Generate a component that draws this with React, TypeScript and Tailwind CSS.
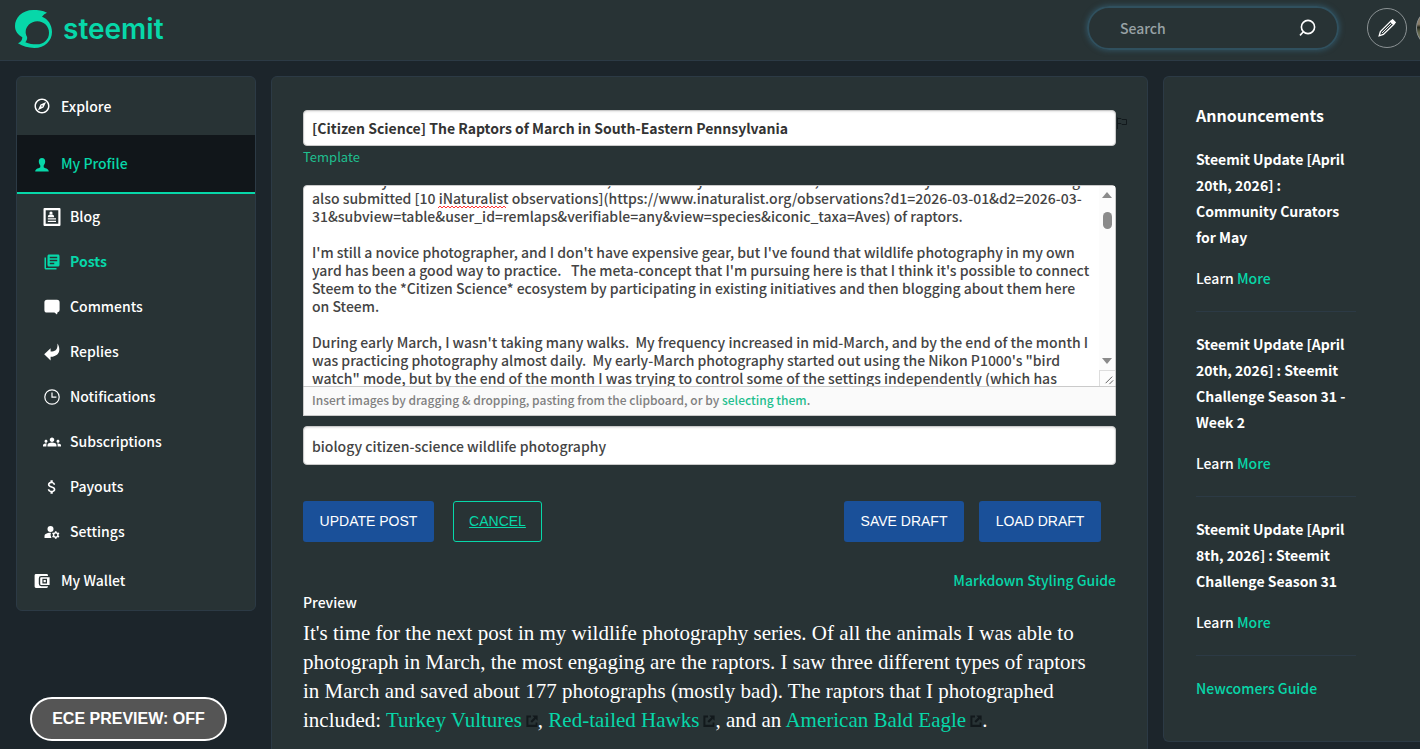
import React, { useEffect, useRef, useState } from 'react';
import { MdAttachMoney, MdGroups, MdLibraryBooks, MdManageAccounts, MdOutlineExplore } from 'react-icons/md';

const initialBody = `Those early hours were the best times to see, and most days I sat at the lake, and in those days I saw them returning. I
also submitted [10 iNaturalist observations](https://www.inaturalist.org/observations?d1=2026-03-01&d2=2026-03-
31&subview=table&user_id=remlaps&verifiable=any&view=species&iconic_taxa=Aves) of raptors.

I'm still a novice photographer, and I don't have expensive gear, but I've found that wildlife photography in my own
yard has been a good way to practice.   The meta-concept that I'm pursuing here is that I think it's possible to connect
Steem to the *Citizen Science* ecosystem by participating in existing initiatives and then blogging about them here
on Steem.

During early March, I wasn't taking many walks.  My frequency increased in mid-March, and by the end of the month I
was practicing photography almost daily.  My early-March photography started out using the Nikon P1000's "bird
watch" mode, but by the end of the month I was trying to control some of the settings independently (which has
been a learning experience).

`;

const announcements = [
  { id: 1, title: 'Steemit Update [April 20th, 2026] : Community Curators for May' },
  { id: 2, title: 'Steemit Update [April 20th, 2026] : Steemit Challenge Season 31 - Week 2' },
  { id: 3, title: 'Steemit Update [April 8th, 2026] : Steemit Challenge Season 31' },
];

const Logo: React.FC = () => (
  <svg viewBox="45 30 111 114" className="h-[38px] w-[37px]" fill="#07d7a9" aria-hidden="true">
    <path
      fillRule="evenodd"
      d="M141 38C128 31 113 30 100 30C65 30 45 54 45 78C45 94 54 104 67 112C67 120 62 127 54 130C68 139 85 144 103 144C135 144 156 122 156 96C156 74 144 57 126 50C130 44 136 40 141 38ZM112 64C132 64 147 79 147 98C147 118 132 133 110 133C98 133 88 132 76 127C80 121 83 115 81 110C78 105 77 101 77 97C77 79 92 64 112 64Z"
    />
  </svg>
);

const SearchIcon: React.FC = () => (
  <svg viewBox="0 0 18 18" className="size-[18px]" fill="none" stroke="#fff" strokeWidth="1.6" aria-hidden="true">
    <circle cx="10" cy="8" r="6.6" />
    <path d="M5.4 12.8L2 16.4" />
  </svg>
);

const PencilIcon: React.FC = () => (
  <svg viewBox="0 0 18 18" className="size-[18px]" fill="none" stroke="#fff" strokeWidth="1.3" aria-hidden="true">
    <path d="M1.2 16.8L2.4 12.6L12.6 2.4L15.6 5.4L5.4 15.4Z" />
    <path d="M4 14L13.6 4.4" strokeWidth="0.9" />
    <path d="M13 2.2L14.6 .8L17.2 3.4L15.8 5Z" fill="#fff" />
  </svg>
);

const PersonIcon: React.FC = () => (
  <svg viewBox="0 0 14 14" className="mt-0.5 size-3.5" fill="currentColor" aria-hidden="true">
    <path d="M7 0C4.8 0 3.7 1.5 3.8 3.6C3.9 5.2 4.4 6.6 5.3 7.4V9.2C4.6 10.2 .2 10.3 .2 13.6H13.8C13.8 10.3 9.4 10.2 8.7 9.2V7.4C9.6 6.6 10.1 5.2 10.2 3.6C10.3 1.5 9.2 0 7 0Z" />
  </svg>
);

const BlogIcon: React.FC = () => (
  <svg viewBox="0 0 18 18" className="size-[18px]" fill="#fff" aria-hidden="true">
    <path fillRule="evenodd" d="M1.5 0H16.5Q17.5 0 17.5 1V17Q17.5 18 16.5 18H1.5Q.5 18 .5 17V1Q.5 0 1.5 0ZM2.7 2.2V15.8H15.3V2.2Z" />
    <circle cx="8" cy="5" r="1.6" />
    <path d="M4.8 9.2C4.8 7 6.2 6.6 8 6.6S11.2 7 11.2 9.2ZM4.8 10.2H13V11.4H4.8ZM4.8 12.8H13V14H4.8Z" />
  </svg>
);

const CommentIcon: React.FC = () => (
  <svg viewBox="0 0 16 16" className="size-4" fill="#fff" aria-hidden="true">
    <path d="M3 .8H13Q15.6 .8 15.6 3.4V11Q15.6 13 13.6 13.2L13 15.4L10.4 13.6H3Q.4 13.6 .4 11V3.4Q.4 .8 3 .8Z" />
  </svg>
);

const ReplyIcon: React.FC = () => (
  <svg viewBox="0 0 16 18" className="h-[18px] w-4" fill="#fff" aria-hidden="true">
    <path d="M.2 11.2L6.6 5.2V8.6C11.4 8.4 14 6.6 13.4 .6C16.8 5.4 16.4 13.2 6.6 13.8V17.4Z" />
  </svg>
);

const ClockIcon: React.FC = () => (
  <svg viewBox="0 0 16 16" className="size-4" fill="none" stroke="#fff" strokeWidth="1.2" aria-hidden="true">
    <circle cx="8" cy="8" r="7.2" />
    <path d="M8 3.6V8.2H12.4" />
  </svg>
);

const WalletIcon: React.FC = () => (
  <svg viewBox="0 0 16 14" className="mt-0.5 h-3.5 w-4" fill="#fff" aria-hidden="true">
    <path d="M2 0H12.6Q14 0 14 1.4V2H7.2Q4.8 2 4.8 4.4V9.8Q4.8 12.2 7.2 12.2H14V12.6Q14 14 12.6 14H2Q.6 14 .6 12.6V1.4Q.6 0 2 0Z" />
    <path fillRule="evenodd" d="M7.2 3.2H15.6V11H7.2Q6.2 11 6.2 10V4.2Q6.2 3.2 7.2 3.2ZM8.4 4.8V9.4H13V4.8Z" />
    <rect x="9.6" y="6" width="2.2" height="2.2" />
  </svg>
);

const FlagIcon: React.FC = () => (
  <svg viewBox="0 0 12 12" className="size-3" fill="none" stroke="#12191c" strokeWidth="1" aria-hidden="true">
    <path d="M1.5 .5V12M1.5 1.5H5L6 2.5H10.5V7.5H6L5 6.5H1.5" />
  </svg>
);

const ExternalIcon: React.FC = () => (
  <svg viewBox="0 0 12 12" className="ml-1 inline size-3 align-baseline" fill="#12191c" aria-hidden="true">
    <path d="M.4 .6H5V2.6H2.4V9.8H9.6V7.4H11.4V12H.4Z" />
    <path d="M6.4 .6H11.6V5.8L9.8 4L6 7.8L4.4 6.2L8.2 2.4Z" />
  </svg>
);

const subItems = [
  { label: 'Blog', icon: <BlogIcon /> },
  { label: 'Posts', icon: <MdLibraryBooks size={18} />, active: true },
  { label: 'Comments', icon: <CommentIcon /> },
  { label: 'Replies', icon: <ReplyIcon /> },
  { label: 'Notifications', icon: <ClockIcon /> },
  { label: 'Subscriptions', icon: <MdGroups size={18} /> },
  { label: 'Payouts', icon: <MdAttachMoney size={18} /> },
  { label: 'Settings', icon: <MdManageAccounts size={18} /> },
];

const Header: React.FC = () => (
  <header className="flex h-[61px] items-start justify-between border-b border-[#2c3a45] bg-[#283335] pl-[15px]">
    <a href="#" className="flex items-center gap-[11px] pt-2.5 font-['Inter',sans-serif] text-[28px] leading-[38px] font-semibold text-[#07d7a9]">
      <Logo />
      <span>steemit</span>
    </a>
    <div className="flex items-center pt-1.5">
      <form className="mr-7 flex h-11 w-[252px] items-center justify-between rounded-full border-2 border-[#30505e] pr-[21px] pl-[31px] shadow-[0_0_5px_1px_#30505e]">
        <input
          type="text"
          aria-label="Search"
          placeholder="Search"
          className="w-40 text-[14px] font-medium text-white placeholder:text-[#98a2a5] focus:outline-none"
        />
        <button type="button" aria-label="Submit search"><SearchIcon /></button>
      </form>
      <a href="#" aria-label="Create a post" className="mr-[9px] flex size-10 items-center justify-center rounded-full border border-[#8b9294]">
        <PencilIcon />
      </a>
      <div className="w-1 overflow-hidden">
        <div className="size-10 rounded-full border border-[#8b9294] bg-[linear-gradient(#8a7d68_40%,#22261c_48%,#5d6146_60%,#a9a593)]" />
      </div>
    </div>
  </header>
);

const Sidebar: React.FC = () => (
  <nav className="self-start overflow-hidden rounded-md border border-[#2c3a45] bg-[#283335] text-[14px] font-medium text-white">
    <a href="#" className="flex h-[58px] items-center pl-4">
      <span className="mr-2.5 flex w-[18px] justify-center"><MdOutlineExplore size={18} /></span>
      Explore
    </a>
    <a href="#" className="flex h-[59px] items-center border-b-2 border-[#07d7a9] bg-[#11161a] pl-4 text-[#07d7a9]">
      <span className="mr-2.5 flex w-[18px] justify-center"><PersonIcon /></span>
      My Profile
    </a>
    <ul>
      {subItems.map((item) => (
        <li key={item.label}>
          <a href="#" className={`flex h-[45px] items-center pl-[26px] ${item.active ? 'font-bold text-[#07d7a9]' : ''}`}>
            <span className="mr-[9px] flex w-[18px] justify-center">{item.icon}</span>
            {item.label}
          </a>
        </li>
      ))}
    </ul>
    <a href="#" className="flex h-14 items-center pb-1 pl-4">
      <span className="mr-2.5 flex w-[18px] justify-center"><WalletIcon /></span>
      My Wallet
    </a>
  </nav>
);

const Editor: React.FC = () => {
  const [title, setTitle] = useState<string>('[Citizen Science] The Raptors of March in South-Eastern Pennsylvania');
  const [body, setBody] = useState<string>(initialBody);
  const [tags, setTags] = useState<string>('biology citizen-science wildlife photography');
  const bodyRef = useRef<HTMLTextAreaElement>(null);

  useEffect(() => {
    if (bodyRef.current) bodyRef.current.scrollTop = 23;
  }, []);

  return (
    <form onSubmit={(e) => e.preventDefault()}>
      <div className="relative">
        <input
          type="text"
          aria-label="Title"
          value={title}
          onChange={(e) => setTitle(e.target.value)}
          className="block h-9 w-full rounded-sm border border-[#cacaca] bg-white px-2 text-[14px] font-bold text-[#333] shadow-[inset_0_1px_2px_rgba(10,10,10,0.1)]"
        />
        <span className="absolute top-[7px] left-full"><FlagIcon /></span>
      </div>
      <a href="#" className="block w-fit text-[13px] leading-[22px] text-[#1fbf8f]">Template</a>

      <div className="relative mt-[17px]">
        <textarea
          ref={bodyRef}
          aria-label="Post body"
          spellCheck={false}
          value={body}
          onChange={(e) => setBody(e.target.value)}
          className="block h-[202px] w-full resize-none overflow-hidden rounded-t-sm border border-[#cacaca] bg-white px-2 py-2 text-[14px] leading-[18px] font-medium whitespace-pre text-[#444]"
        />
        <svg className="absolute top-[20px] left-[135px] h-1 w-[68px]" aria-hidden="true">
          <defs>
            <pattern id="squiggle" width="4" height="4" patternUnits="userSpaceOnUse">
              <path d="M0 3L2 1L4 3" fill="none" stroke="#f33" />
            </pattern>
          </defs>
          <rect width="68" height="4" fill="url(#squiggle)" />
        </svg>
        <div className="absolute top-px right-px bottom-px flex w-4 flex-col items-center bg-[#fcfcfc]" aria-hidden="true">
          <svg viewBox="0 0 10 6" className="mt-1.5 h-1.5 w-2.5" fill="#8b8b8b"><path d="M5 0L10 6H0Z" /></svg>
          <div className="mt-3.5 h-[17px] w-[9px] rounded-full bg-[#8b8b8b]" />
          <svg viewBox="0 0 10 6" className="mt-auto mb-1.5 h-1.5 w-2.5" fill="#8b8b8b"><path d="M5 6L10 0H0Z" /></svg>
          <svg viewBox="0 0 16 16" className="size-4 border-t border-l border-[#ddd]" fill="none" stroke="#555">
            <path d="M6 13L13 6M10 14L14 10" />
          </svg>
        </div>
      </div>
      <p className="h-[29px] border border-t-0 border-[#cacaca] bg-[#fafafa] px-2 text-[12px] leading-[26px] font-medium text-[#808080]">
        Insert images by dragging &amp; dropping, pasting from the clipboard, or by{' '}
        <a href="#" className="text-[#1fbf8f]">selecting them</a>.
      </p>

      <input
        type="text"
        aria-label="Tags"
        value={tags}
        onChange={(e) => setTags(e.target.value)}
        className="mt-2.5 block h-[39px] w-full rounded-sm border border-[#cacaca] bg-white px-2 text-[14px] font-medium text-[#444] shadow-[inset_0_1px_2px_rgba(10,10,10,0.1)]"
      />

      <div className="mt-9 flex h-[41px] pr-[15px] font-['Liberation_Sans',Arial,sans-serif] text-[14px] text-white">
        <button type="submit" className="w-[131px] rounded-[3px] bg-[#1a5099]">UPDATE POST</button>
        <button type="button" className="ml-[19px] w-[89px] rounded-[3px] border border-[#07d7a9] text-[#07d7a9] underline">CANCEL</button>
        <button type="button" className="ml-auto w-[120px] rounded-[3px] bg-[#1a5099]">SAVE DRAFT</button>
        <button type="button" className="ml-[15px] w-[122px] rounded-[3px] bg-[#1a5099]">LOAD DRAFT</button>
      </div>
    </form>
  );
};

const Preview: React.FC = () => (
  <section className="mt-[27px] text-white">
    <a href="#" className="block text-right text-[14px] leading-[22px] font-medium text-[#07d7a9]">Markdown Styling Guide</a>
    <h2 className="text-[14px] leading-[22px] font-medium">Preview</h2>
    <p className="mt-1.5 font-['Liberation_Serif',serif] text-[21px] leading-[29px]">
      It's time for the next post in my wildlife photography series. Of all the animals I was able to<br />
      photograph in March, the most engaging are the raptors. I saw three different types of raptors<br />
      in March and saved about 177 photographs (mostly bad). The raptors that I photographed<br />
      included: <a href="#" className="text-[#07d7a9]">Turkey Vultures<ExternalIcon /></a>,{' '}
      <a href="#" className="text-[#07d7a9]">Red-tailed Hawks<ExternalIcon /></a>, and an{' '}
      <a href="#" className="text-[#07d7a9]">American Bald Eagle<ExternalIcon /></a>.
    </p>
  </section>
);

const Announcements: React.FC = () => (
  <aside className="self-start rounded-l-md border border-r-0 border-[#2c3a45] bg-[#283335] pt-[25px] pr-16 pb-10 pl-8 text-white">
    <h2 className="mb-[18px] text-[16px] leading-[26px] font-bold">Announcements</h2>
    {announcements.map((item) => (
      <div key={item.id} className="mb-[19px] border-b border-[#2c3a45] pb-5">
        <h3 className="mb-[15px] text-[14px] leading-[26px] font-bold">{item.title}</h3>
        <p className="text-[14px] leading-[26px] font-medium">Learn <a href="#" className="text-[#07d7a9]">More</a></p>
      </div>
    ))}
    <a href="#" className="text-[14px] leading-[26px] font-medium text-[#07d7a9]">Newcomers Guide</a>
  </aside>
);

const App: React.FC = () => {
  const [ecePreview, setEcePreview] = useState<boolean>(false);

  return (
    <div className="min-h-screen overflow-x-hidden bg-[#1c252b] font-['Noto_Sans_CJK_SC',sans-serif]">
      <Header />
      <div className="grid grid-cols-[240px_minmax(0,1fr)_257px] gap-[15px] pt-[15px] pl-4">
        <Sidebar />
        <main className="rounded-md border border-[#2c3a45] bg-[#283335] px-[31px] pt-[33px] pb-8">
          <Editor />
          <Preview />
        </main>
        <Announcements />
      </div>
      <button
        type="button"
        onClick={() => setEcePreview(!ecePreview)}
        className="fixed bottom-2 left-[30px] h-11 w-[197px] rounded-full border-2 border-white bg-[#555] font-['Liberation_Sans',Arial,sans-serif] text-[16px] font-bold text-white"
      >
        ECE PREVIEW: {ecePreview ? 'ON' : 'OFF'}
      </button>
    </div>
  );
};

export default App;
